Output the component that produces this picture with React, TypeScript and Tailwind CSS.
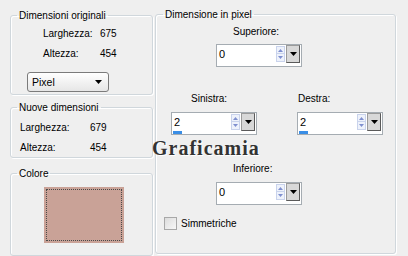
import React from "react";

function Spinner({ value, bar }: { value: string; bar?: boolean }) {
  return (
    <div className="w-[86px] h-[23px] border border-[#a5acb2] bg-white flex flex-col">
      <div className="flex h-[18px]">
        <div className="flex-1 pl-[2px] pt-[3px] text-[11px] leading-[13px] text-black">{value}</div>
        <div className="w-[9px] flex flex-col mt-[1px] mr-[1px]">
          <div className="h-[8px] flex items-center justify-center bg-[#eef2fb] border border-[#c9d3ec]">
            <svg width="5" height="3" viewBox="0 0 5 3"><path d="M0 3 L2.5 0 L5 3 Z" fill="#7f8fcf" /></svg>
          </div>
          <div className="h-[8px] flex items-center justify-center bg-[#eef2fb] border border-[#c9d3ec] border-t-0">
            <svg width="5" height="3" viewBox="0 0 5 3"><path d="M0 0 L2.5 3 L5 0 Z" fill="#7f8fcf" /></svg>
          </div>
        </div>
        <div className="w-[14px] h-[18px] mr-[1px] border border-[#5a5a5a] border-t-[#9a9a9a] border-l-[#9a9a9a] bg-[#d8d8d8] flex items-center justify-center">
          <svg width="7" height="4" viewBox="0 0 7 4"><path d="M0 0 L7 0 L3.5 4 Z" fill="#000" /></svg>
        </div>
      </div>
      <div className="flex-1 flex items-end pl-[1px] pb-[0px]">
        {bar ? <div className="w-[9px] h-[3px] bg-[#3a8ee6]" /> : null}
      </div>
    </div>
  );
}

export default function App() {
  const group =
    "border border-[#d0d7dc] rounded-[3px] shadow-[inset_1px_1px_0_#ffffff,1px_1px_0_#ffffff]";
  return (
    <div
      className="relative w-[408px] h-[256px] overflow-hidden bg-[#efefef] flex text-[10px] leading-[13px] text-black"
      style={{ fontFamily: '"Liberation Sans", Arial, sans-serif' }}
    >
      {/* left column */}
      <div className="ml-[10px] w-[143px] pt-[9px] flex flex-col">
        <fieldset className={`${group} h-[89px]`}>
          <legend className="ml-[6px] px-[2px]">Dimensioni originali</legend>
          <div className="pl-[32px] pt-[5px] flex flex-col gap-[7px]">
            <div className="flex">
              <span className="w-[57px]">Larghezza:</span>
              <span>675</span>
            </div>
            <div className="flex">
              <span className="w-[57px]">Altezza:</span>
              <span>454</span>
            </div>
          </div>
          <div className="ml-[16px] mt-[12px] w-[82px] h-[20px] rounded-[3px] border border-[#7b7b7b] bg-gradient-to-b from-white to-[#e6e6e6] flex items-center justify-between pl-[4px] pr-[6px]">
            <span className="text-[10.5px]">Pixel</span>
            <svg width="7" height="4" viewBox="0 0 7 4"><path d="M0 0 L7 0 L3.5 4 Z" fill="#000" /></svg>
          </div>
        </fieldset>

        <fieldset className={`${group} h-[59px] mt-[6px]`}>
          <legend className="ml-[6px] px-[2px]">Nuove dimensioni</legend>
          <div className="pl-[9px] pt-[7px] flex flex-col gap-[7px]">
            <div className="flex">
              <span className="w-[70px]">Larghezza:</span>
              <span>679</span>
            </div>
            <div className="flex">
              <span className="w-[70px]">Altezza:</span>
              <span>454</span>
            </div>
          </div>
        </fieldset>

        <fieldset className={`${group} h-[92px] mt-[9px]`}>
          <legend className="ml-[6px] px-[2px]">Colore</legend>
          <div className="ml-[33px] mt-[7px] w-[80px] h-[56px] bg-[#c9a297] p-[2px]">
            <div className="w-full h-full border border-dotted border-[#4a4a4a]" />
          </div>
        </fieldset>
      </div>

      {/* right group */}
      <div className="ml-[2px] pt-[8px]">
        <fieldset className={`${group} w-[241px] h-[246px]`}>
          <legend className="ml-[7px] px-[2px]">Dimensione in pixel</legend>
          <div className="flex flex-col pt-[4px]">
            <div className="ml-[77px]">Superiore:</div>
            <div className="ml-[60px] mt-[6px]">
              <Spinner value="0" />
            </div>
            <div className="flex mt-[25px]">
              <div className="ml-[15px] flex flex-col">
                <div className="ml-[20px]">Sinistra:</div>
                <div className="mt-[7px]">
                  <Spinner value="2" bar />
                </div>
              </div>
              <div className="ml-[40px] flex flex-col">
                <div className="ml-[1px]">Destra:</div>
                <div className="mt-[7px]">
                  <Spinner value="2" bar />
                </div>
              </div>
            </div>
            <div className="ml-[77px] mt-[27px]">Inferiore:</div>
            <div className="ml-[60px] mt-[7px]">
              <Spinner value="0" />
            </div>
            <div className="ml-[8px] mt-[12px] flex items-center">
              <div className="w-[13px] h-[13px] border border-[#a8a8a8] bg-gradient-to-br from-[#dcdcdc] to-[#f8f8f8]" />
              <span className="ml-[4px]">Simmetriche</span>
            </div>
          </div>
        </fieldset>
      </div>

      {/* watermark */}
      <div
        className="absolute left-[152px] top-[137px] text-[20px] leading-[22px] font-bold tracking-[1px] text-[#333333] [text-shadow:1px_1px_0_#ffffff]"
        style={{ fontFamily: '"Liberation Serif", "Times New Roman", serif' }}
      >
        Graficamia
      </div>
    </div>
  );
}
